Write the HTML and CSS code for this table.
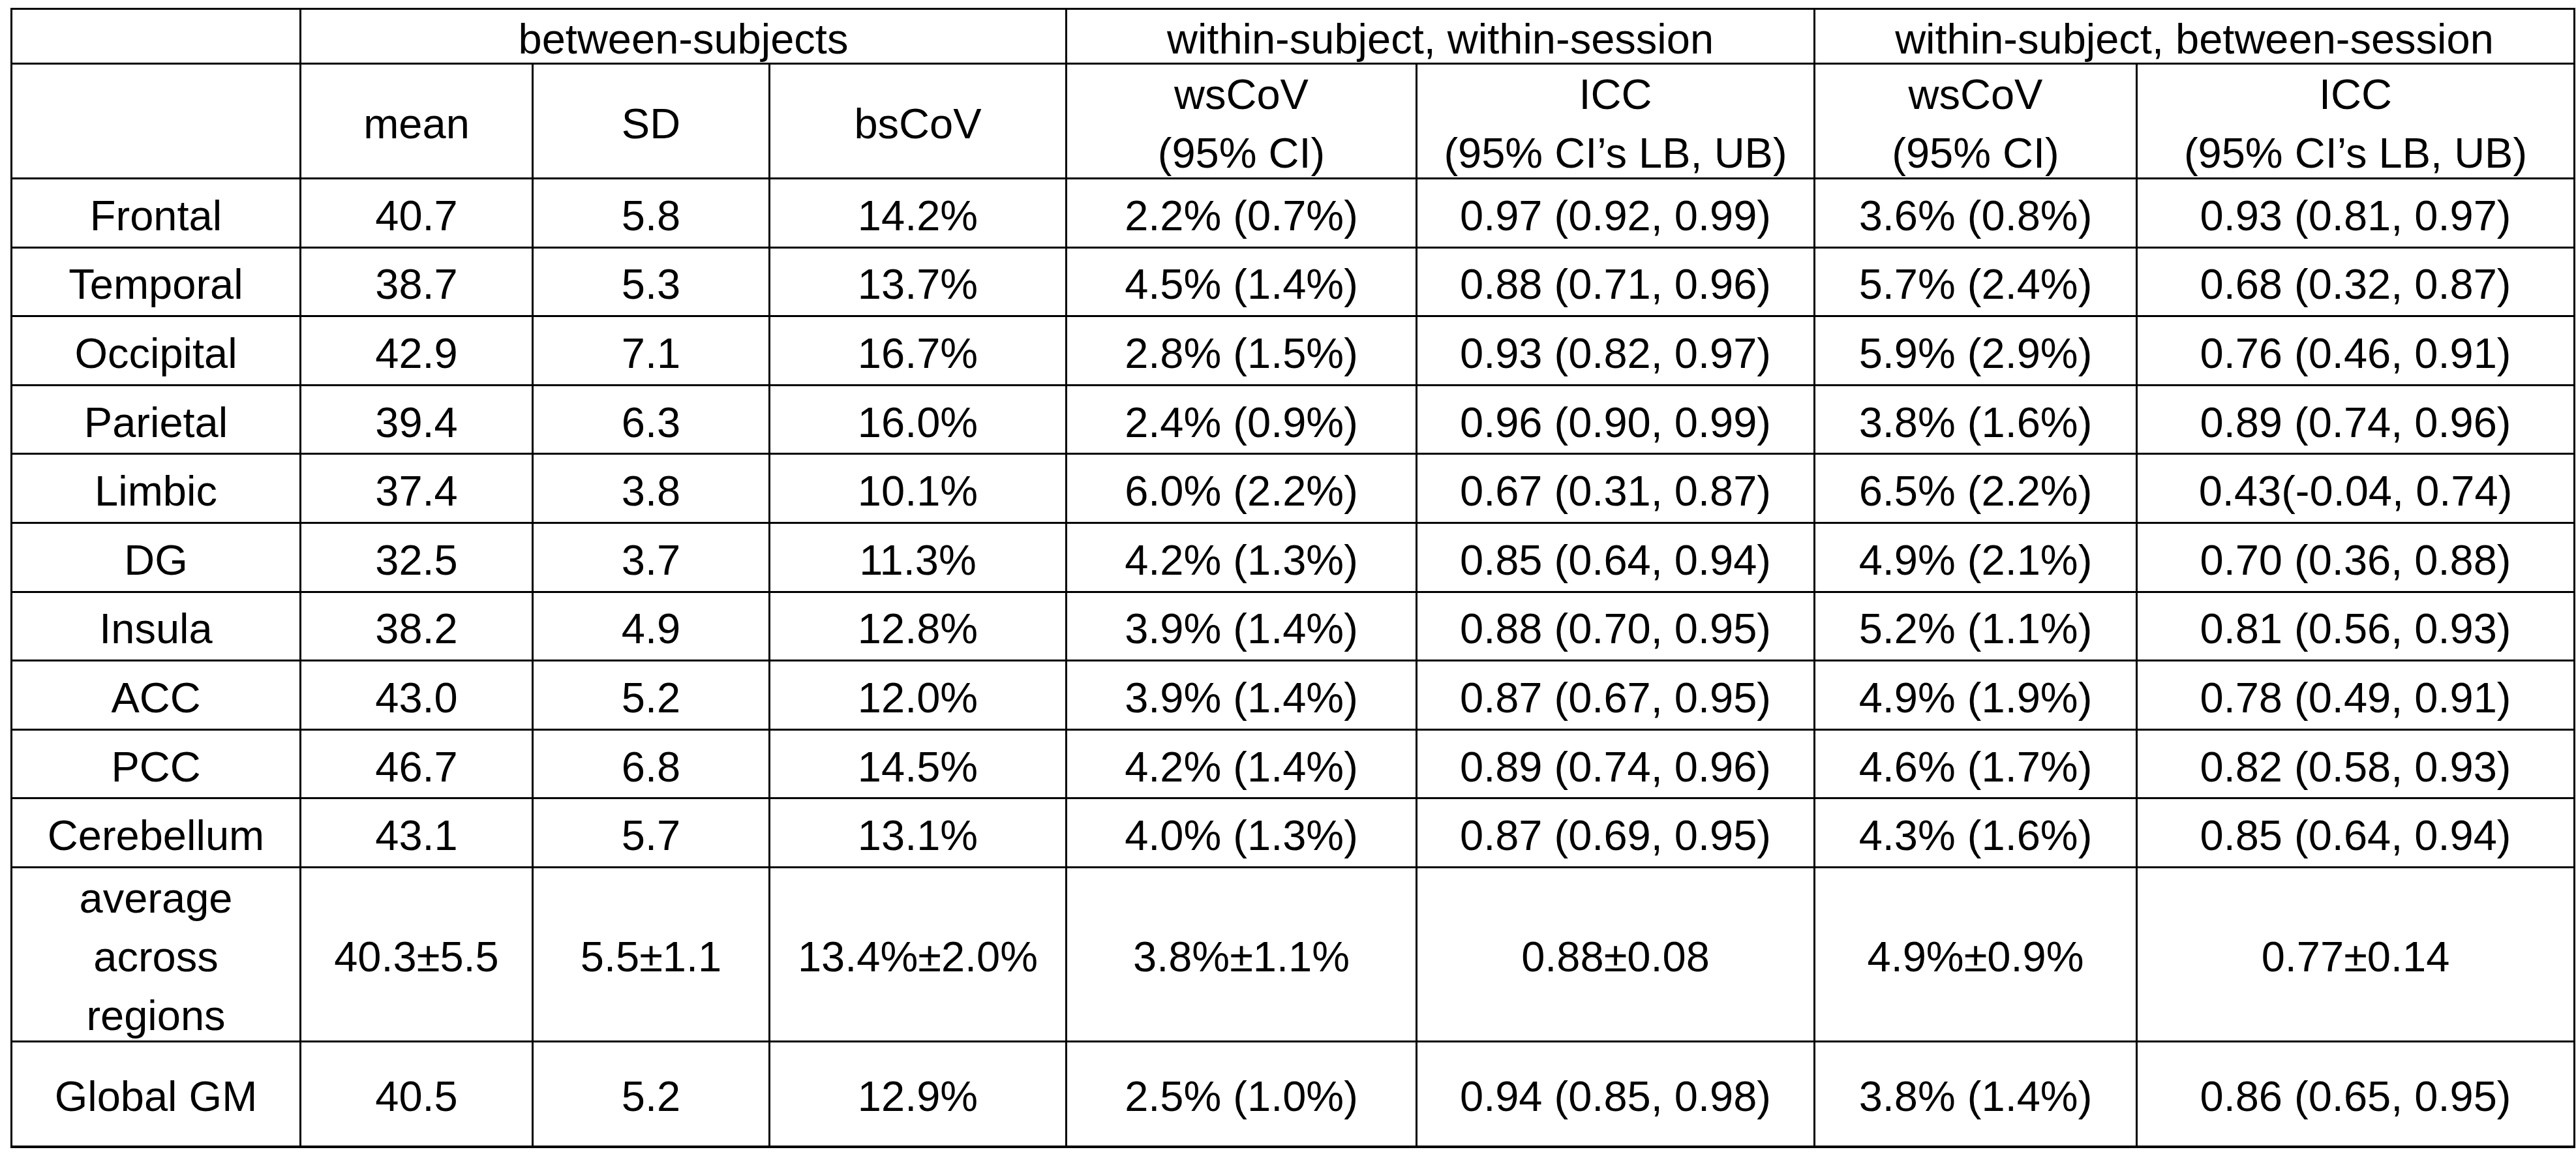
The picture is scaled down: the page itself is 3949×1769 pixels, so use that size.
FILE: index.html
```html
<!DOCTYPE html>
<html lang="en">
<head>
<meta charset="utf-8">
<title>Reliability table</title>
<link rel="stylesheet" href="styles.css">
</head>
<body>
<div class="tbl" role="table">
  <div class="cell"></div>
  <div class="cell span3">between-subjects</div>
  <div class="cell span2">within-subject, within-session</div>
  <div class="cell span2">within-subject, between-session</div>

  <div class="cell"></div>
  <div class="cell">mean</div>
  <div class="cell">SD</div>
  <div class="cell">bsCoV</div>
  <div class="cell">wsCoV<br>(95% CI)</div>
  <div class="cell">ICC<br>(95% CI’s LB, UB)</div>
  <div class="cell">wsCoV<br>(95% CI)</div>
  <div class="cell">ICC<br>(95% CI’s LB, UB)</div>

  <div class="cell">Frontal</div><div class="cell">40.7</div><div class="cell">5.8</div><div class="cell">14.2%</div><div class="cell">2.2% (0.7%)</div><div class="cell">0.97 (0.92, 0.99)</div><div class="cell">3.6% (0.8%)</div><div class="cell">0.93 (0.81, 0.97)</div>
  <div class="cell">Temporal</div><div class="cell">38.7</div><div class="cell">5.3</div><div class="cell">13.7%</div><div class="cell">4.5% (1.4%)</div><div class="cell">0.88 (0.71, 0.96)</div><div class="cell">5.7% (2.4%)</div><div class="cell">0.68 (0.32, 0.87)</div>
  <div class="cell">Occipital</div><div class="cell">42.9</div><div class="cell">7.1</div><div class="cell">16.7%</div><div class="cell">2.8% (1.5%)</div><div class="cell">0.93 (0.82, 0.97)</div><div class="cell">5.9% (2.9%)</div><div class="cell">0.76 (0.46, 0.91)</div>
  <div class="cell">Parietal</div><div class="cell">39.4</div><div class="cell">6.3</div><div class="cell">16.0%</div><div class="cell">2.4% (0.9%)</div><div class="cell">0.96 (0.90, 0.99)</div><div class="cell">3.8% (1.6%)</div><div class="cell">0.89 (0.74, 0.96)</div>
  <div class="cell">Limbic</div><div class="cell">37.4</div><div class="cell">3.8</div><div class="cell">10.1%</div><div class="cell">6.0% (2.2%)</div><div class="cell">0.67 (0.31, 0.87)</div><div class="cell">6.5% (2.2%)</div><div class="cell">0.43(-0.04, 0.74)</div>
  <div class="cell">DG</div><div class="cell">32.5</div><div class="cell">3.7</div><div class="cell">11.3%</div><div class="cell">4.2% (1.3%)</div><div class="cell">0.85 (0.64, 0.94)</div><div class="cell">4.9% (2.1%)</div><div class="cell">0.70 (0.36, 0.88)</div>
  <div class="cell">Insula</div><div class="cell">38.2</div><div class="cell">4.9</div><div class="cell">12.8%</div><div class="cell">3.9% (1.4%)</div><div class="cell">0.88 (0.70, 0.95)</div><div class="cell">5.2% (1.1%)</div><div class="cell">0.81 (0.56, 0.93)</div>
  <div class="cell">ACC</div><div class="cell">43.0</div><div class="cell">5.2</div><div class="cell">12.0%</div><div class="cell">3.9% (1.4%)</div><div class="cell">0.87 (0.67, 0.95)</div><div class="cell">4.9% (1.9%)</div><div class="cell">0.78 (0.49, 0.91)</div>
  <div class="cell">PCC</div><div class="cell">46.7</div><div class="cell">6.8</div><div class="cell">14.5%</div><div class="cell">4.2% (1.4%)</div><div class="cell">0.89 (0.74, 0.96)</div><div class="cell">4.6% (1.7%)</div><div class="cell">0.82 (0.58, 0.93)</div>
  <div class="cell">Cerebellum</div><div class="cell">43.1</div><div class="cell">5.7</div><div class="cell">13.1%</div><div class="cell">4.0% (1.3%)</div><div class="cell">0.87 (0.69, 0.95)</div><div class="cell">4.3% (1.6%)</div><div class="cell">0.85 (0.64, 0.94)</div>

  <div class="cell">average<br>across<br>regions</div><div class="cell">40.3±5.5</div><div class="cell">5.5±1.1</div><div class="cell">13.4%±2.0%</div><div class="cell">3.8%±1.1%</div><div class="cell">0.88±0.08</div><div class="cell">4.9%±0.9%</div><div class="cell">0.77±0.14</div>

  <div class="cell">Global GM</div><div class="cell">40.5</div><div class="cell">5.2</div><div class="cell">12.9%</div><div class="cell">2.5% (1.0%)</div><div class="cell">0.94 (0.85, 0.98)</div><div class="cell">3.8% (1.4%)</div><div class="cell">0.86 (0.65, 0.95)</div>
</div>
</body>
</html>
```

FILE: styles.css
```css
html, body {
  margin: 0;
  background: #ffffff;
}

body {
  padding: 12px 0 0 16px;
  font-family: "Liberation Sans", Arial, sans-serif;
  font-size: 65px;
  color: #000000;
}

.tbl {
  display: grid;
  width: max-content;
  grid-template-columns: 440px 353px 360px 452px 534px 607px 491px 668px;
  grid-template-rows: 81px 173px repeat(10, 102.6px) 264px 158px;
  gap: 3px;
  padding: 3px 3px 4px 3px;
  background: #000000;
}

.cell {
  background: #ffffff;
  display: flex;
  flex-direction: column;
  align-items: center;
  justify-content: center;
  text-align: center;
  line-height: 90px;
  padding-top: 9px;
  white-space: nowrap;
  min-height: 0;
}

.span3 {
  grid-column: span 3;
}

.span2 {
  grid-column: span 2;
}
```
